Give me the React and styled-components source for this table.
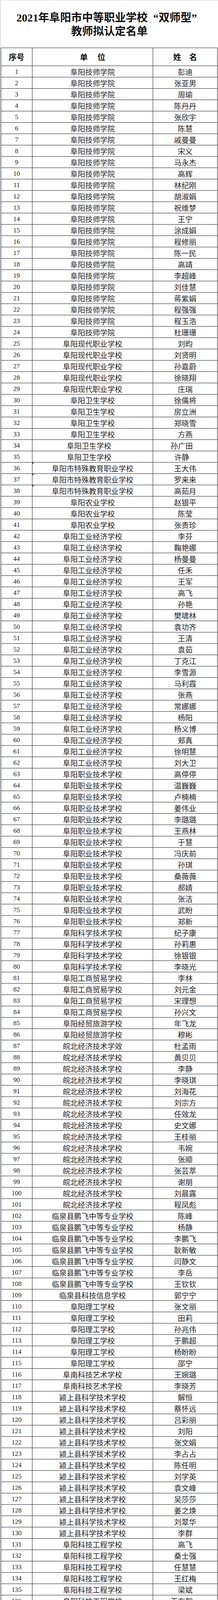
import React from "react";
import styled, { createGlobalStyle } from "styled-components";

const GlobalStyle = createGlobalStyle`
  html, body {
    margin: 0;
    padding: 0;
    background: #fff;
  }
  body {
    font-family: "Noto Sans CJK SC", "Noto Sans", sans-serif;
    color: #1e1e1e;
    line-height: 1;
  }
`;

const Page = styled.div`
  width: 558px;
  box-sizing: border-box;
  border-top: 1px solid #d4d4dc;
  border-left: 1px solid #b4b6c6;
  padding-left: 1px;
  padding-bottom: 6px;
`;

const TitleBlock = styled.div`
  height: 121px;
  box-sizing: border-box;
  padding-top: 27px;
  text-align: center;
  font-family: "Liberation Serif", "Noto Sans CJK SC", serif;
  font-weight: 700;
  font-size: 28px;
  line-height: 35px;
  color: #111;
`;

const TitleLine = styled.div`
  height: 35px;
  white-space: nowrap;
`;

const Quote = styled.span`
  display: inline-block;
  width: 1em;
  text-align: ${(p) => p.$side};
`;

const Table = styled.div`
  width: 555px;
  box-sizing: border-box;
  border-top: 1px solid #1c1c1c;
  border-left: 1px solid #1c1c1c;
`;

const Row = styled.div`
  display: flex;
  height: ${(p) => (p.$head ? "46px" : "29px")};
  overflow: hidden;
`;

const Cell = styled.div`
  position: relative;
  flex: 0 0 ${(p) => p.$w}px;
  height: 100%;
  display: flex;
  align-items: center;
  justify-content: center;
  box-sizing: border-box;
  border-right: 1px solid #1c1c1c;
  border-bottom: 1px solid #1c1c1c;
  padding-right: ${(p) => (p.$shift || 0) * 2}px;
  white-space: nowrap;
  line-height: 1;
  overflow: hidden;

  &::before {
    content: "";
    display: ${(p) => (p.$flag ? "block" : "none")};
    position: absolute;
    top: 0;
    left: 0;
    border-top: 5px solid #3a8a3a;
    border-right: 5px solid transparent;
  }
`;

const HeadCell = styled(Cell)`
  font-size: 20px;
  font-weight: 700;
  color: #111;
`;

const Spaced = styled.span`
  letter-spacing: ${(p) => p.$gap}px;
  margin-right: -${(p) => p.$gap}px;
`;

const NumCell = styled(Cell)`
  font-family: "Liberation Serif", serif;
  font-size: 17px;
  color: #222;
`;

const TextCell = styled(Cell)`
  font-size: 19px;
  font-weight: 400;
  color: #222;
`;

const COLS = [80, 309, 165];

const groups = [
  ["阜阳技师学院", "彭迪 张亚男 周瑜 陈丹丹 张欣宇 陈慧 戚曼曼 宋义 马永杰 高辉 林纪刚 胡淑娟 祝维梦 王宁 涂成娟 程修丽 陈一民 高靖 李超峰 刘佳慧 蒋紫娟 程强强 程玉浩 杜珊珊"],
  ["阜阳现代职业学校", "刘昀 刘贤明 孙嘉蔚 徐晓翔 庄瑞"],
  ["阜阳卫生学校", "徐儒将 房立洲 郑晓雪 方燕 孙广田 许静"],
  ["阜阳市特殊教育职业学校", "王大伟 罗来来 高茹月"],
  ["阜阳农业学校", "赵银平 陈莹 张贵珍"],
  ["阜阳工业经济学校", "李芬 鞠艳娜 杨曼曼 任禾 王军 高飞 孙艳 樊啸林 袁功齐 王清 袁茹 丁克江 李雪源 马利霞 张燕 常娜娜 杨阳 杨义博 郏真 徐明慧 刘大卫"],
  ["阜阳职业技术学校", "高停停 温巍巍 卢楠楠 姜伟业 李璐璐 王燕林 于慧 冯庆前 孙琪 桑薇薇 郝婧 张洁 武盼 郑新"],
  ["阜阳科学技术学校", "纪子康 孙莉惠 徐银银 李晓光"],
  ["阜阳工商贸易学校", "李林 刘元金 宋理想 孙兴文"],
  ["阜阳经贸旅游学校", "年飞龙 穆彬"],
  ["皖北经济技术学效", "杜孟雨"],
  ["皖北经济技术学校", "黄贝贝 李静 李晓琪 刘海花 刘宗方 任效龙 史文娜 王桂丽 韦婉 张顺 张芸萃 谢朋 刘晨露 程凤彪"],
  ["临泉县鹏飞中等专业学校", "陈峰 杨静 李鹏飞 耿新敏 闫静文 李岳 王钦钦"],
  ["临泉县科技信息学校", "郭宁宁"],
  ["阜阳理工学校", "张文丽 田莉 孙兆伟 于鹏超 杨盼盼 邵宁"],
  ["阜南科技艺术学校", "王婉璐 李晓芳"],
  ["颍上县科学技术学校", "解恒 蔡怀远 吕彩丽 刘阳 张文娟 李占占 陈任明 刘学英 袁文峰 吴莎莎 姜之焕 刘翠华 李群"],
  ["阜阳科技工程学校", "高飞 桑士强 任慧慧 王红梅 梁斌 王东絮 赵崇 刘沛艳 李朋 周冰冰 杨晓军 陶田丽"],
  ["阜阳市医药科技工程学校", "戴博文 王平平 胡静静 孙亚杰 张君伟 赵凯 刘丽 张端 张一迪 贾坤 谢婧"],
  ["皖北电子信息工程学校", "李倩玉 崔楠 蒋博 时金奎 郭琳琳 苗振 何阿陶"],
];

// rows where the source sheet has text pushed off-centre, and Excel's green corner marks
const unitShift = { 34: 9, 35: 9 };
const nameShift = { 34: 9, 35: 9, 136: 9 };
const flagged = [36, 37, 38];

const rows = groups
  .flatMap(([unit, names]) => names.split(" ").map((name) => ({ unit, name })))
  .map((r, i) => ({ ...r, no: i + 1 }));

export default function App() {
  return (
    <>
      <GlobalStyle />
      <Page>
        <TitleBlock>
          <TitleLine>
            2021年阜阳市中等职业学校<Quote $side="right">“</Quote>双师型<Quote $side="left">”</Quote>
          </TitleLine>
          <TitleLine>教师拟认定名单</TitleLine>
        </TitleBlock>
        <Table>
          <Row $head>
            <HeadCell $w={COLS[0]}>序号</HeadCell>
            <HeadCell $w={COLS[1]}>
              <Spaced $gap={25}>单位</Spaced>
            </HeadCell>
            <HeadCell $w={COLS[2]}>
              <Spaced $gap={21}>姓名</Spaced>
            </HeadCell>
          </Row>
          {rows.map((r) => (
            <Row key={r.no}>
              <NumCell $w={COLS[0]}>{r.no}</NumCell>
              <TextCell $w={COLS[1]} $shift={unitShift[r.no]} $flag={flagged.includes(r.no)}>
                {r.unit}
              </TextCell>
              <TextCell $w={COLS[2]} $shift={nameShift[r.no]}>
                {r.name}
              </TextCell>
            </Row>
          ))}
        </Table>
      </Page>
    </>
  );
}
